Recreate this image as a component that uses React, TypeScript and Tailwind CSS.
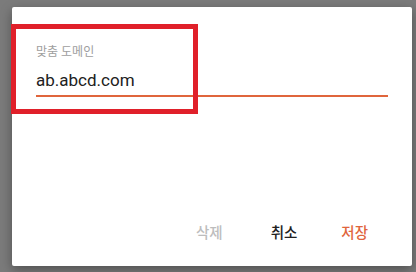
import React from "react";

export default function App() {
  return (
    <div
      className="relative w-[416px] h-[272px] bg-[#7b7b7b] overflow-hidden"
      style={{ fontFamily: 'Roboto, "Noto Sans CJK KR", sans-serif' }}
    >
      <div className="absolute left-[12px] top-[7px] w-[400px] h-[259px] bg-white rounded-[2px] shadow-[0_4px_12px_rgba(0,0,0,0.35)] flex flex-col">
        <div className="px-6 pt-[37px]">
          <div className="text-[12px] leading-[16px] text-[#9e9e9e]">맞춤 도메인</div>
          <div className="mt-[9px] text-[17px] leading-[22px] text-[#212121]">ab.abcd.com</div>
          <div className="mt-[4px] border-t-2 border-solid border-[#e0653c]" />
        </div>
        <div className="mt-auto flex justify-end items-center gap-3 pr-[28px] pb-[14px]">
          <button className="px-4 mr-1 h-[36px] text-[14.5px] font-medium text-[#bdbdbd]">삭제</button>
          <button className="px-4 h-[36px] text-[14.5px] font-medium text-[#212121]">취소</button>
          <button className="px-4 h-[36px] text-[14.5px] font-medium text-[#e0653c]">저장</button>
        </div>
      </div>
      <div className="absolute left-[11px] top-[24px] w-[187px] h-[90px] border-[5px] border-[#e0202a]" />
    </div>
  );
}
